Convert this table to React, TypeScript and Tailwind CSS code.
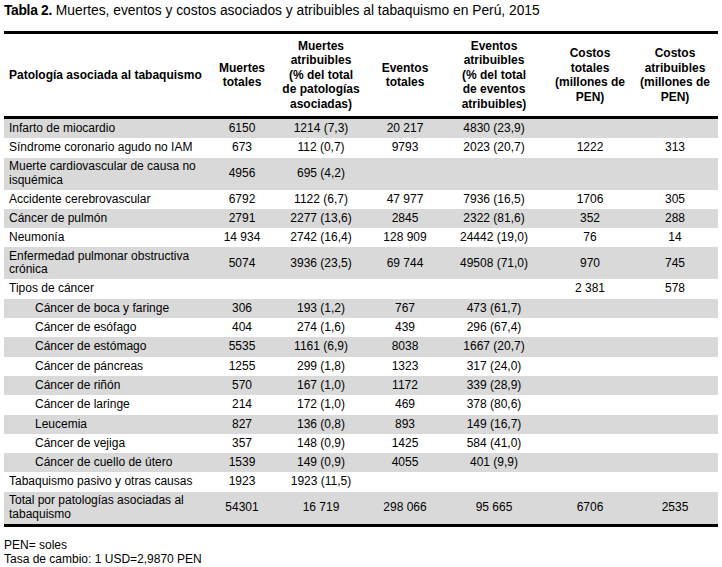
type Cell = string;

interface RowData {
  label: string;
  values: Cell[];
  gray?: boolean;
  indent?: boolean;
  double?: boolean;
}

const rows: RowData[] = [
  { label: "Infarto de miocardio", values: ["6150", "1214 (7,3)", "20 217", "4830 (23,9)", "", ""], gray: true },
  { label: "Síndrome coronario agudo no IAM", values: ["673", "112 (0,7)", "9793", "2023 (20,7)", "1222", "313"] },
  { label: "Muerte cardiovascular de causa no isquémica", values: ["4956", "695 (4,2)", "", "", "", ""], gray: true, double: true },
  { label: "Accidente cerebrovascular", values: ["6792", "1122 (6,7)", "47 977", "7936 (16,5)", "1706", "305"] },
  { label: "Cáncer de pulmón", values: ["2791", "2277 (13,6)", "2845", "2322 (81,6)", "352", "288"], gray: true },
  { label: "Neumonía", values: ["14 934", "2742 (16,4)", "128 909", "24442 (19,0)", "76", "14"] },
  { label: "Enfermedad pulmonar obstructiva crónica", values: ["5074", "3936 (23,5)", "69 744", "49508 (71,0)", "970", "745"], gray: true, double: true },
  { label: "Tipos de cáncer", values: ["", "", "", "", "2 381", "578"] },
  { label: "Cáncer de boca y faringe", values: ["306", "193 (1,2)", "767", "473 (61,7)", "", ""], gray: true, indent: true },
  { label: "Cáncer de esófago", values: ["404", "274 (1,6)", "439", "296 (67,4)", "", ""], indent: true },
  { label: "Cáncer de estómago", values: ["5535", "1161 (6,9)", "8038", "1667 (20,7)", "", ""], gray: true, indent: true },
  { label: "Cáncer de páncreas", values: ["1255", "299 (1,8)", "1323", "317 (24,0)", "", ""], indent: true },
  { label: "Cáncer de riñón", values: ["570", "167 (1,0)", "1172", "339 (28,9)", "", ""], gray: true, indent: true },
  { label: "Cáncer de laringe", values: ["214", "172 (1,0)", "469", "378 (80,6)", "", ""], indent: true },
  { label: "Leucemia", values: ["827", "136 (0,8)", "893", "149 (16,7)", "", ""], gray: true, indent: true },
  { label: "Cáncer de vejiga", values: ["357", "148 (0,9)", "1425", "584 (41,0)", "", ""], indent: true },
  { label: "Cáncer de cuello de útero", values: ["1539", "149 (0,9)", "4055", "401 (9,9)", "", ""], gray: true, indent: true },
  { label: "Tabaquismo pasivo y otras causas", values: ["1923", "1923 (11,5)", "", "", "", ""] },
  { label: "Total por patologías asociadas al tabaquismo", values: ["54301", "16 719", "298 066", "95 665", "6706", "2535"], gray: true, double: true },
];

const cols = "grid grid-cols-[202px_72px_86px_82px_96px_96px_80px]";

function App() {
  return (
    <div
      className="w-[722px] h-[567px] bg-white text-black px-[4px] overflow-hidden"
      style={{ fontFamily: '"Liberation Sans", Arial, sans-serif' }}
    >
      {/* Título */}
      <p className="pt-[2.5px] text-[13.8px] leading-[16px] whitespace-nowrap">
        <span className="font-bold tracking-[-0.3px]">Tabla 2.</span> Muertes, eventos y costos asociados y
        atribuibles al tabaquismo en Perú, 2015
      </p>

      <div className="mt-[12.5px] w-[714px] border-t-[3px] border-b-[3px] border-black text-[12px]">
        {/* Encabezado */}
        <div className={`${cols} h-[82px] items-center font-bold leading-[14.5px] border-b-[3px] border-black box-content`}>
          <div className="pl-[5px]">Patología asociada al tabaquismo</div>
          <div className="text-center">Muertes<br />totales</div>
          <div className="text-center">Muertes<br />atribuibles<br />(% del total<br />de patologías<br />asociadas)</div>
          <div className="text-center">Eventos<br />totales</div>
          <div className="text-center">Eventos<br />atribuibles<br />(% del total<br />de eventos<br />atribuibles)</div>
          <div className="text-center">Costos<br />totales<br />(millones de<br />PEN)</div>
          <div className="text-center pr-[6px]">Costos<br />atribuibles<br />(millones de<br />PEN)</div>
        </div>

        {rows.map((r) => (
          <div
            key={r.label}
            className={`${cols} items-center leading-[13.3px] ${r.double ? "h-[32px]" : "h-[19.3px]"} ${r.gray ? "bg-[#d9d9d9]" : "bg-white"}`}
          >
            <div className={r.indent ? "pl-[31px]" : "pl-[5px] pr-[2px]"}>{r.label}</div>
            {r.values.map((v, i) => (
              <div key={i} className={i === 5 ? "text-center pr-[6px]" : "text-center"}>
                {v}
              </div>
            ))}
          </div>
        ))}
      </div>

      <div className="mt-[11px] text-[12px] leading-[14px]">
        <p>PEN= soles</p>
        <p>Tasa de cambio: 1 USD=2,9870 PEN</p>
      </div>
    </div>
  );
}

export default App;
